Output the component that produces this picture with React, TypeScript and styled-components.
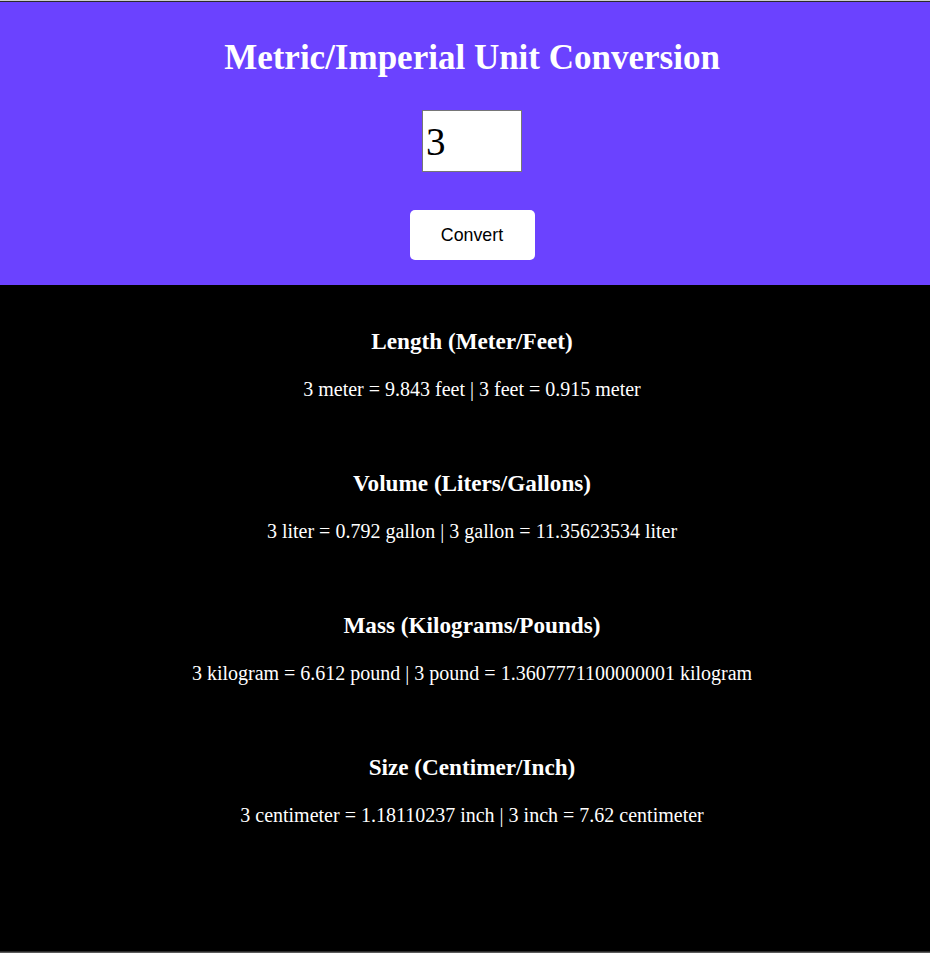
import React, { useState } from "react";
import styled, { createGlobalStyle } from "styled-components";

const Global = createGlobalStyle`
  html, body { margin: 0; padding: 0; background: #000; }
  body { font-family: "Liberation Serif", "Times New Roman", serif; }
`;

const Page = styled.div`
  height: 953px;
  box-sizing: border-box;
  border-top: 1px solid #cdcdcd;
  border-bottom: 1px solid #5a5a5a;
  display: flex;
  flex-direction: column;
`;

const Header = styled.header`
  background: #6b42ff;
  border-top: 1px solid #2a2a2a;
  height: 284px;
  box-sizing: border-box;
  display: flex;
  flex-direction: column;
  align-items: center;
  padding-top: 36px;
  padding-left: 14px;
`;

const Title = styled.h1`
  margin: 0;
  color: #fff;
  font-size: 35px;
  line-height: 40px;
  font-weight: bold;
`;

const NumberInput = styled.input`
  margin-top: 32px;
  width: 100px;
  height: 62px;
  box-sizing: border-box;
  border: 1px solid #767676;
  padding: 0 3px;
  font-family: "Liberation Serif", "Times New Roman", serif;
  font-size: 39px;
  color: #000;
  background: #fff;
  outline: none;
`;

const ConvertButton = styled.button`
  margin-top: 38px;
  width: 125px;
  height: 50px;
  border: none;
  border-radius: 5px;
  background: #fff;
  color: #000;
  font-family: "Liberation Sans", Arial, sans-serif;
  font-size: 17.8px;
  cursor: pointer;
`;

const Results = styled.main`
  flex: 1;
  background: #000;
  border-bottom: 1px solid #2b2b2b;
  padding-top: 43px;
  padding-left: 14px;
  display: flex;
  flex-direction: column;
  align-items: center;
  gap: 69px;
`;

const Section = styled.section`
  display: flex;
  flex-direction: column;
  align-items: center;
  gap: 23px;
  color: #fff;
`;

const SectionTitle = styled.h3`
  margin: 0;
  font-size: 23.2px;
  line-height: 27px;
  font-weight: bold;
`;

const SectionText = styled.p`
  margin: 0;
  font-size: 20px;
  line-height: 23px;
`;

export default function App() {
  const [value, setValue] = useState("3");
  const sections = [
    { title: "Length (Meter/Feet)", text: "3 meter = 9.843 feet | 3 feet = 0.915 meter" },
    { title: "Volume (Liters/Gallons)", text: "3 liter = 0.792 gallon | 3 gallon = 11.35623534 liter" },
    { title: "Mass (Kilograms/Pounds)", text: "3 kilogram = 6.612 pound | 3 pound = 1.3607771100000001 kilogram" },
    { title: "Size (Centimer/Inch)", text: "3 centimeter = 1.18110237 inch | 3 inch = 7.62 centimeter" },
  ];
  return (
    <>
      <Global />
      <Page>
        <Header>
          <Title>Metric/Imperial Unit Conversion</Title>
          <NumberInput type="text" value={value} onChange={(e) => setValue(e.target.value)} />
          <ConvertButton>Convert</ConvertButton>
        </Header>
        <Results>
          {sections.map((s) => (
            <Section key={s.title}>
              <SectionTitle>{s.title}</SectionTitle>
              <SectionText>{s.text}</SectionText>
            </Section>
          ))}
        </Results>
      </Page>
    </>
  );
}
